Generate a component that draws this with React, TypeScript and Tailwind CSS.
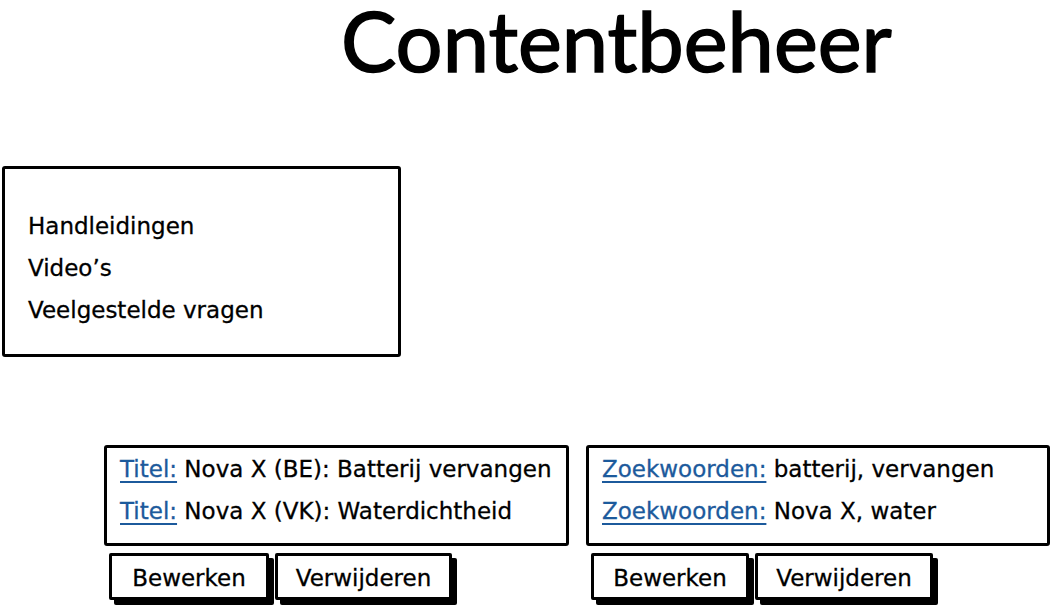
const bodyFont = { fontFamily: "'DejaVu Sans', 'Noto Sans', sans-serif" };
const titleFont = { fontFamily: "Lato, 'Noto Sans', sans-serif" };

function LinkLabel({ children }: { children: string }) {
  return <span className="text-[#1c5a9c] underline decoration-[2px] underline-offset-[4px]">{children}</span>;
}

function SketchButton({ label, width }: { label: string; width: string }) {
  return (
    <button
      className={`${width} flex h-[47px] items-center justify-center rounded-[2px] border-[3px] border-black bg-white pt-[3px] text-[23px] text-black shadow-[5px_5px_0_#000] [-webkit-text-stroke:0.3px_currentColor]`}
    >
      {label}
    </button>
  );
}

function ResultGroup({
  rows,
  buttons,
}: {
  rows: { label: string; value: string }[];
  buttons: { label: string; width: string }[];
}) {
  return (
    <div className="flex flex-col">
      <div className="flex h-[101px] flex-col gap-[14px] rounded-[3px] border-[3px] border-black bg-white pl-[13px] pt-[7px]">
        {rows.map((r, i) => (
          <div
            key={i}
            className="whitespace-nowrap text-[23px] leading-[28px] text-black [-webkit-text-stroke:0.3px_currentColor]"
          >
            <LinkLabel>{r.label}</LinkLabel> {r.value}
          </div>
        ))}
      </div>
      <div className="ml-[5px] mt-[7px] flex gap-[6px]">
        {buttons.map((b) => (
          <SketchButton key={b.label} label={b.label} width={b.width} />
        ))}
      </div>
    </div>
  );
}

export default function App() {
  return (
    <div className="h-[606px] w-[1052px] overflow-hidden bg-white" style={bodyFont}>
      <h1
        className="ml-[341px] text-[83px] leading-[80px] text-black [-webkit-text-stroke:1.5px_black]"
        style={titleFont}
      >
        Contentbeheer
      </h1>

      {/* Category panel */}
      <div className="ml-[2px] mt-[86px] flex h-[191px] w-[399px] flex-col gap-[14px] rounded-[3px] border-[3px] border-black pl-[23px] pt-[43px] text-[23px] leading-[28px] [-webkit-text-stroke:0.3px_black]">
        <div>Handleidingen</div>
        <div>Video’s</div>
        <div>Veelgestelde vragen</div>
      </div>

      {/* Results */}
      <div className="ml-[104px] mt-[88px] flex gap-[17px]">
        <div className="w-[465px]">
          <ResultGroup
            rows={[
              { label: "Titel:", value: "Nova X (BE): Batterij vervangen" },
              { label: "Titel:", value: "Nova X (VK): Waterdichtheid" },
            ]}
            buttons={[
              { label: "Bewerken", width: "w-[160px]" },
              { label: "Verwijderen", width: "w-[177px]" },
            ]}
          />
        </div>
        <div className="w-[464px]">
          <ResultGroup
            rows={[
              { label: "Zoekwoorden:", value: "batterij, vervangen" },
              { label: "Zoekwoorden:", value: "Nova X, water" },
            ]}
            buttons={[
              { label: "Bewerken", width: "w-[158px]" },
              { label: "Verwijderen", width: "w-[178px]" },
            ]}
          />
        </div>
      </div>
    </div>
  );
}
